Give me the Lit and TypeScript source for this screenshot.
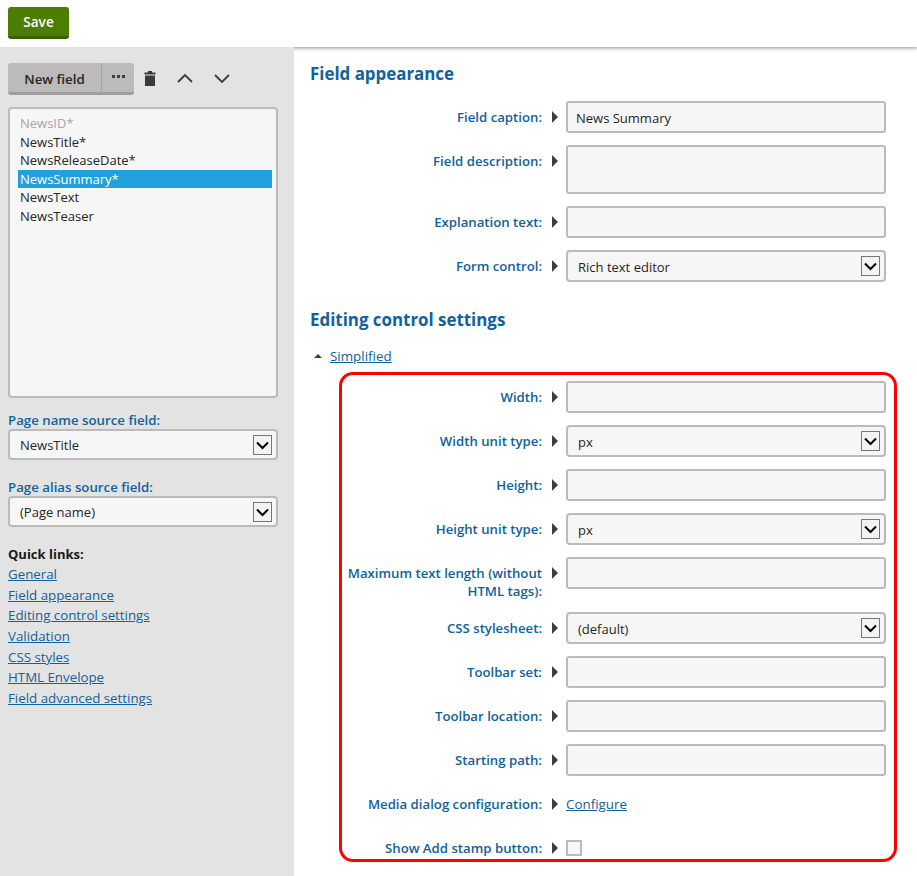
import { LitElement, html, css, nothing } from "lit";
import { customElement } from "lit/decorators.js";

type Row = { label: string[]; kind: "input" | "area" | "select" | "link" | "check"; value?: string };

const appearance: Row[] = [
  { label: ["Field caption:"], kind: "input", value: "News Summary" },
  { label: ["Field description:"], kind: "area" },
  { label: ["Explanation text:"], kind: "input" },
  { label: ["Form control:"], kind: "select", value: "Rich text editor" },
];
const editing: Row[] = [
  { label: ["Width:"], kind: "input" },
  { label: ["Width unit type:"], kind: "select", value: "px" },
  { label: ["Height:"], kind: "input" },
  { label: ["Height unit type:"], kind: "select", value: "px" },
  { label: ["Maximum text length (without", "HTML tags):"], kind: "input" },
  { label: ["CSS stylesheet:"], kind: "select", value: "(default)" },
  { label: ["Toolbar set:"], kind: "input" },
  { label: ["Toolbar location:"], kind: "input" },
  { label: ["Starting path:"], kind: "input" },
  { label: ["Media dialog configuration:"], kind: "link", value: "Configure" },
  { label: ["Show Add stamp button:"], kind: "check" },
];
const fields = ["NewsID*", "NewsTitle*", "NewsReleaseDate*", "NewsSummary*", "NewsText", "NewsTeaser"];
const links = ["General", "Field appearance", "Editing control settings", "Validation", "CSS styles", "HTML Envelope", "Field advanced settings"];

const selectArrow = html`<span class="arrowbox"><svg width="17" height="18" viewBox="0 0 17 18"><path d="M3 6.5 L8.5 12 L14 6.5" fill="none" stroke="#000" stroke-width="2"/></svg></span>`;

@customElement("app-root")
export class AppRoot extends LitElement {
  static styles = css`
    :host { display: block; width: 917px; height: 876px; overflow: hidden; background: #fff; font-family: "Open Sans", "Noto Sans", sans-serif; font-size: 13px; color: #262524; }
    * { box-sizing: border-box; }
    .top { position: relative; z-index: 2; height: 47px; padding: 7px 8px 0; background: #fff; box-shadow: 0 1px 4px rgba(0,0,0,.45); }
    .save { width: 61px; height: 32px; border: 0; border-bottom: 3px solid #3a6100; border-radius: 3px; background: #4b7d00; color: #fff; font: 600 13.6px "Open Sans", sans-serif; padding: 0; }
    .body { display: flex; height: 829px; }
    .side { position: relative; z-index: 3; width: 294px; flex: none; background: #e3e3e3; padding: 16px 16px 0 8px; }
    .tools { display: flex; align-items: center; height: 32px; }
    .split { display: flex; width: 126px; height: 32px; border-bottom: 3px solid #9f9d9d; border-radius: 3px; background: #bcbaba; font-weight: 600; font-size: 13.3px; color: #262524; }
    .split .main { width: 94px; border-right: 1px solid #a3a1a1; display: flex; align-items: center; justify-content: center; padding-top: 3px; }
    .split .more { flex: 1; display: flex; align-items: center; justify-content: center; gap: 2px; padding-bottom: 3px; }
    .more i { width: 3px; height: 3px; background: #403e3d; display: block; }
    .tools svg { display: block; }
    .t1 { margin-left: 8px; }
    .t2 { margin-left: 18px; }
    .t3 { margin-left: 19px; }
    .list { margin-top: 12px; height: 291px; width: 270px; border: 2px solid #bbb; border-radius: 4px; background: #f6f6f6; padding: 5px 4px 0 8px; }
    .list div { height: 18.5px; line-height: 18px; padding-left: 2px; font-size: 13px; white-space: nowrap; }
    .list .dis { color: #a6a6a6; }
    .list .sel { background: #22a0dc; color: #fff; }
    .sidelabel { color: #10629a; font-weight: 600; font-size: 13.25px; line-height: 18px; margin-top: 18px; }
    .sidelabel.first { margin-top: 13px; }
    .side .select { width: 270px; height: 31px; }
    .select { display: flex; align-items: center; justify-content: space-between; height: 32px; border: 2px solid #bbb; border-radius: 4px; background: #f6f6f6; padding: 0 4px 0 10px; font-size: 13px; color: #262524; }
    .select > span:first-child { padding-top: 1px; }
    .arrowbox { width: 19px; height: 20px; border: 1px solid #767676; background: #f3f3f3; display: flex; align-items: center; justify-content: center; }
    .ql { margin-top: 18px; font-weight: 700; font-size: 13px; color: #1a1a1a; line-height: 18px; }
    .qlinks { display: flex; flex-direction: column; margin-top: 1px; }
    .qlinks a { height: 20.67px; line-height: 20.67px; font-size: 13.3px; }
    a { color: #10629a; text-decoration: underline; font-size: 13.4px; }
    .main-pane { flex: 1; min-width: 0; padding: 16px 0 0 16px; }
    h2 { margin: 0; font-size: 16.9px; font-weight: 700; color: #10629a; line-height: 22px; }
    .rows { display: flex; flex-direction: column; gap: 12px; margin-left: -16px; width: 592px; }
    .rows.a { margin-top: 16px; }
    .row { display: grid; grid-template-columns: 248px 14px 320px; column-gap: 0; align-items: start; }
    .lbl { text-align: right; color: #10629a; font-weight: 600; font-size: 13.2px; line-height: 18px; padding-top: 7px; }
    .lbl span { display: block; white-space: nowrap; }
    .mark { width: 0; height: 0; border-left: 6px solid #403e3d; border-top: 6px solid transparent; border-bottom: 6px solid transparent; margin: 10px 0 0 10px; grid-column: 2; }
    .ctl { grid-column: 3; margin-left: 10px; width: 320px; }
    .input { display: block; width: 320px; height: 32px; border: 2px solid #bbb; border-radius: 3px; background: #f6f6f6; padding: 1px 8px 0; font: 13px "Open Sans", sans-serif; color: #262524; outline: none; }
    .area { height: 49px; }
    .ctl .select { width: 320px; }
    .ctl .select > span:first-child { padding-top: 2px; }
    .linkctl { height: 32px; display: flex; align-items: center; }
    .checkctl { height: 32px; display: flex; align-items: center; }
    .check { width: 16px; height: 16px; border: 2px solid #bbb; background: #f6f6f6; }
    h2.second { margin-top: 27px; }
    .toggle { display: flex; align-items: center; gap: 8px; margin: 16px 0 0 4px; height: 18px; line-height: 18px; }
    .toggle i { width: 0; height: 0; border-left: 4px solid transparent; border-right: 4px solid transparent; border-bottom: 4px solid #403e3d; }
    .framed { position: relative; margin-top: 16px; }
    .frame { position: absolute; left: 29px; top: -9px; width: 558px; height: 490px; border: 3px solid #f00; border-radius: 14px; pointer-events: none; }
  `;

  private row(r: Row) {
    let ctl: unknown = nothing;
    if (r.kind === "input") ctl = html`<input class="input" .value=${r.value ?? ""} />`;
    if (r.kind === "area") ctl = html`<div class="input area"></div>`;
    if (r.kind === "select") ctl = html`<div class="select"><span>${r.value}</span>${selectArrow}</div>`;
    if (r.kind === "link") ctl = html`<div class="linkctl"><a href="#">${r.value}</a></div>`;
    if (r.kind === "check") ctl = html`<div class="checkctl"><span class="check"></span></div>`;
    return html`<div class="row">
      <div class="lbl">${r.label.map((l) => html`<span>${l}</span>`)}</div>
      <div class="mark"></div>
      <div class="ctl">${ctl}</div>
    </div>`;
  }

  render() {
    return html`
      <div class="top"><button class="save">Save</button></div>
      <div class="body">
        <aside class="side">
          <div class="tools">
            <div class="split"><div class="main">New field</div><div class="more"><i></i><i></i><i></i></div></div>
            <svg class="t1" width="16" height="18" viewBox="0 0 16 18"><path d="M2.5 2.5H6V1H10V2.5H13.5V4.5H2.5Z M3 5.5H13V16H3Z" fill="#3a3a3a"/></svg>
            <svg class="t2" width="18" height="18" viewBox="0 0 18 18"><path d="M2 12 L9 5 L16 12" fill="none" stroke="#3a3a3a" stroke-width="1.8"/></svg>
            <svg class="t3" width="18" height="18" viewBox="0 0 18 18"><path d="M2 5 L9 12 L16 5" fill="none" stroke="#3a3a3a" stroke-width="1.8"/></svg>
          </div>
          <div class="list">
            ${fields.map((f, i) => html`<div class=${i === 0 ? "dis" : i === 3 ? "sel" : ""}>${f}</div>`)}
          </div>
          <div class="sidelabel first">Page name source field:</div>
          <div class="select"><span>NewsTitle</span>${selectArrow}</div>
          <div class="sidelabel">Page alias source field:</div>
          <div class="select"><span>(Page name)</span>${selectArrow}</div>
          <div class="ql">Quick links:</div>
          <div class="qlinks">${links.map((l) => html`<a href="#">${l}</a>`)}</div>
        </aside>
        <main class="main-pane">
          <h2>Field appearance</h2>
          <div class="rows a">${appearance.map((r) => this.row(r))}</div>
          <h2 class="second">Editing control settings</h2>
          <div class="toggle"><i></i><a href="#">Simplified</a></div>
          <div class="framed">
            <div class="rows">${editing.map((r) => this.row(r))}</div>
            <div class="frame"></div>
          </div>
        </main>
      </div>
    `;
  }
}
